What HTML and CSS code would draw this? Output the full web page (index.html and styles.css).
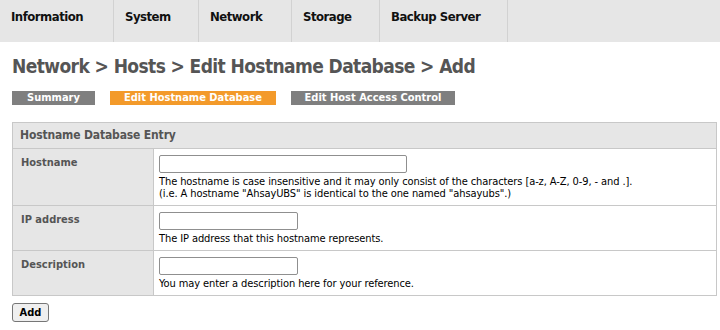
FILE: index.html
```html
<!DOCTYPE html>
<html>
<head>
<meta charset="utf-8">
<link rel="stylesheet" href="styles.css">
</head>
<body>
<div class="nav">
  <div class="nav-item w1">Information</div>
  <div class="nav-item w2">System</div>
  <div class="nav-item w3">Network</div>
  <div class="nav-item w4">Storage</div>
  <div class="nav-item w5">Backup Server</div>
</div>
<div class="content">
  <h1 class="title">Network &gt; Hosts &gt; Edit Hostname Database &gt; Add</h1>
  <div class="tabs">
    <span class="tab t1">Summary</span>
    <span class="tab t2 active">Edit Hostname Database</span>
    <span class="tab t3">Edit Host Access Control</span>
  </div>
  <table class="entry">
    <tr><th colspan="2" class="head">Hostname Database Entry</th></tr>
    <tr class="r1">
      <td class="label">Hostname</td>
      <td class="value">
        <input type="text" class="inp wide">
        <div class="help">The hostname is case insensitive and it may only consist of the characters [a-z, A-Z, 0-9, - and .].<br>(i.e. A hostname "AhsayUBS" is identical to the one named "ahsayubs".)</div>
      </td>
    </tr>
    <tr>
      <td class="label">IP address</td>
      <td class="value">
        <input type="text" class="inp narrow">
        <div class="help">The IP address that this hostname represents.</div>
      </td>
    </tr>
    <tr>
      <td class="label">Description</td>
      <td class="value">
        <input type="text" class="inp narrow">
        <div class="help">You may enter a description here for your reference.</div>
      </td>
    </tr>
  </table>
  <button class="btn">Add</button>
</div>
</body>
</html>
```
FILE: styles.css
```css
html, body {
  margin: 0;
  padding: 0;
  background: #fff;
  font-family: "DejaVu Sans Condensed", "DejaVu Sans", sans-serif;
  color: #000;
}
.nav {
  display: flex;
  height: 42px;
  background: #e6e6e6;
}
.nav-item {
  box-sizing: border-box;
  border-right: 1px solid #d2d2d2;
  padding: 9px 0 0 11px;
  font-weight: bold;
  font-size: 13px;
  letter-spacing: -0.5px;
  color: #111;
}
.w1 { width: 114px; }
.w2 { width: 85px; }
.w3 { width: 93px; }
.w4 { width: 88px; }
.w5 { width: 128px; }
.content {
  padding: 0 12px;
}
.title {
  margin: 0;
  padding-top: 13px;
  font-size: 19px;
  letter-spacing: -0.6px;
  font-weight: bold;
  color: #555;
  line-height: 23px;
}
.tabs {
  display: flex;
  gap: 15px;
  margin-top: 13px;
  height: 14px;
}
.tab {
  display: block;
  box-sizing: border-box;
  height: 14px;
  line-height: 14px;
  font-size: 11px;
  font-weight: bold;
  color: #fff;
  text-align: center;
  background: #7f7f7f;
}
.tab.t1 { width: 83px; }
.tab.t2 { width: 166px; background: #f39a2a; }
.tab.t3 { width: 164px; }
.entry {
  margin-top: 17px;
  width: 705px;
  border-collapse: collapse;
  font-size: 11px;
}
.entry td, .entry th {
  border: 1px solid #c8c8c8;
}
.head {
  background: #e6e6e6;
  text-align: left;
  color: #555;
  font-size: 12px;
  letter-spacing: -0.15px;
  font-weight: bold;
  padding: 5px 7px 6px;
  height: 13px;
}
.label {
  width: 124px;
  background: #e6e6e6;
  color: #555;
  font-weight: bold;
  font-size: 11px;
  vertical-align: top;
  padding: 7px 8px;
}
.value {
  padding: 6px 5px 5px 5px;
  vertical-align: top;
}
.inp {
  display: block;
  box-sizing: border-box;
  height: 18px;
  margin: 0;
  border: 1px solid #8f8f8f;
  border-radius: 2px;
  background: #fff;
}
.wide { width: 248px; }
.narrow { width: 139px; }
.help {
  font-size: 11px;
  letter-spacing: -0.09px;
  line-height: 12px;
  margin-top: 3px;
}
.btn {
  margin-top: 7px;
  display: block;
  width: 37px;
  height: 19px;
  padding: 0;
  font-family: inherit;
  font-size: 11px;
  font-weight: bold;
  color: #000;
  background: #efefef;
  border: 1px solid #767676;
  border-radius: 3px;
}
```
